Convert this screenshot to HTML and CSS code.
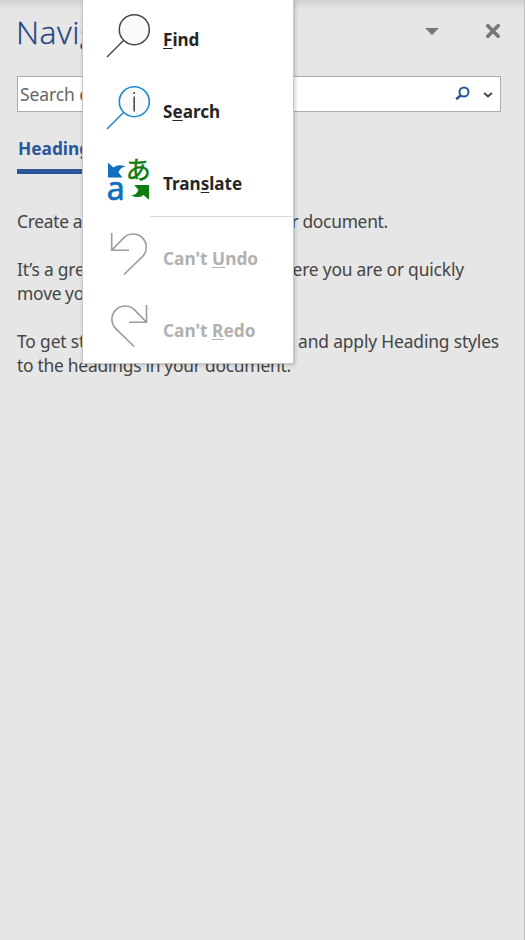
FILE: index.html
```html
<!DOCTYPE html>
<html lang="en">
<head>
<meta charset="utf-8">
<title>Navigation</title>
<link rel="stylesheet" href="styles.css">
</head>
<body>
<main class="pane">
  <header class="pane-header">
    <h1>Navigation</h1>
    <svg class="arrow" width="14" height="8" viewBox="0 0 14 8"><path d="M0 0h14L7 7Z" fill="#777"/></svg>
    <svg class="close" width="16" height="16" viewBox="0 0 16 16"><path d="M2.800 2.800l10.400 10.400M13.200 2.800l-10.400 10.400" stroke="#777" stroke-width="3.700" stroke-linecap="round" fill="none"/></svg>
  </header>
  <div class="search">
    <span class="search-label">Search document</span>
    <svg width="16" height="16" viewBox="0 0 16 16" fill="none" stroke="#2b579a" stroke-width="2"><circle cx="9" cy="6" r="4.500"/><path d="M6 9L1.200 13.200" stroke-width="2.600"/></svg>
    <svg class="chevron" width="10" height="7" viewBox="0 0 10 7"><path d="M1.200 1L5 4.500L8.800 1" fill="none" stroke="#444" stroke-width="1.900"/></svg>
  </div>
  <nav class="tabs"><span class="tab">Headings</span></nav>
  <section class="copy">
    <p><span class="line w1">Create an interactive outline of your document.</span></p>
    <p><span class="line w2">It’s a great way to keep track of where you are or quickly</span><span class="line w3">move your content around.</span></p>
    <p><span class="line w4">To get started, go to the Home tab and apply Heading styles</span><span class="line w5">to the headings in your document.</span></p>
  </section>
</main>
<div class="menu">
  <div class="item">
    <svg class="icon" width="48" height="48" viewBox="0 0 48 48" fill="none" stroke="#444" stroke-width="1.500"><circle cx="31.300" cy="17.700" r="15" fill="#fafafa"/><path d="M20.500 28.500L4 45"/></svg>
    <span class="label"><u>F</u>ind</span>
  </div>
  <div class="item">
    <svg class="icon" width="48" height="48" viewBox="0 0 48 48" fill="none" stroke="#1e8bcd" stroke-width="1.600"><circle cx="31.300" cy="17.700" r="15" fill="#fafafa"/><path d="M20.500 28.500L4 45"/><path d="M31.200 8v2M31.200 12.500v15" stroke="#444" stroke-width="1.500"/></svg>
    <span class="label">S<u>e</u>arch</span>
  </div>
  <div class="item">
    <svg class="icon" width="48" height="48" viewBox="0 0 48 48"><path d="M5 6.700L10.500 11.500Q15 7.500 22.700 10.500Q17.500 11 15.500 16.500L19.500 21.400H5Z" fill="#106ebe"/><path d="M46 43.700V29H31.200L35.500 34Q33.500 39 28 39.500Q36 43 40.500 38.900Z" fill="#107c10"/><text class="latin" x="3.800" y="43.600">a</text><text class="kana" x="22.700" y="22.500">あ</text></svg>
    <span class="label">Tran<u>s</u>late</span>
  </div>
  <div class="rule"></div>
  <div class="item disabled">
    <svg class="icon" width="48" height="48" viewBox="0 0 48 48" fill="none" stroke="#9c9c9c" stroke-width="1.600"><path d="M8.700 2V19.200H26M8.700 19.200L20.900 6.600A13.300 13.300 0 0 1 39.700 25.400L21 43.500"/></svg>
    <span class="label">Can't <u>U</u>ndo</span>
  </div>
  <div class="item disabled">
    <svg class="icon" width="48" height="48" viewBox="0 0 48 48" fill="none" stroke="#9c9c9c" stroke-width="1.600"><path d="M43.500 2V19.200H26M43.500 19.200L31.300 6.600A13.300 13.300 0 0 0 12.500 25.400L31.200 43.500"/></svg>
    <span class="label">Can't <u>R</u>edo</span>
  </div>
</div>
</body>
</html>
```

FILE: styles.css
```css
* { box-sizing: border-box; }
body {
  margin: 0;
  width: 525px;
  height: 940px;
  overflow: hidden;
  position: relative;
  font-family: "Noto Sans", "Open Sans", sans-serif;
  color: #444;
  background: #e6e6e6;
}
.pane {
  height: 940px;
  padding: 0 23px 0 17px;
  border-right: 1px solid #bdbdbd;
  background: linear-gradient(#d0d0d0, #e6e6e6 9px);
}
.pane-header { height: 76px; display: flex; align-items: flex-start; }
h1 {
  margin: 10px auto 0 -1px;
  font: 300 32px/44px "Open Sans", sans-serif;
  letter-spacing: .5px;
  color: #1f4383;
  -webkit-text-stroke: .3px #1f4383;
}
.arrow { margin: 28px 46px 0 0; }
.close { margin: 23px 0 0; }
.search {
  width: 484px;
  height: 36px;
  padding: 0 7px 0 2px;
  display: flex;
  align-items: center;
  background: #fff;
  border: 1px solid #ababab;
}
.search-label { margin-right: auto; font-size: 17.5px; color: #666; letter-spacing: -.1px; }
.chevron { margin: 2px 0 0 12px; }
.tabs { height: 62px; display: flex; align-items: flex-start; }
.tab {
  height: 62px;
  padding: 24px 1px 0;
  font-size: 17.3px;
  line-height: 26px;
  font-weight: 700;
  color: #2b579a;
  background: linear-gradient(#2b579a, #2b579a) 0 57px / 100% 5px no-repeat;
}
.copy { padding-top: 35px; font-size: 17.4px; line-height: 24px; letter-spacing: -.15px; word-spacing: -.8px; }
.copy p { margin: 0 0 24px; }
.line { display: block; white-space: nowrap; text-align-last: justify; }
.w1 { width: 371px; letter-spacing: -.28px; word-spacing: -.5px; }
.w2 { width: 447px; }
.w3 { width: 212px; }
.w4 { width: 482px; }
.w5 { width: 274px; letter-spacing: -.22px; word-spacing: -.5px; }
.menu {
  position: absolute;
  left: 82px;
  top: 0;
  width: 212px;
  height: 364px;
  background: #fff;
  border: 1px solid #c6c6c6;
  border-top: 0;
  box-shadow: 1px 1px 4px rgba(0,0,0,.22);
}
.item { height: 72px; display: flex; padding-left: 20px; }
.icon { margin-top: 12px; flex: none; overflow: visible; }
.label {
  margin: 27px 0 0 12px;
  font-size: 17.1px;
  line-height: 26px;
  font-weight: 700;
  color: #262626;
  white-space: nowrap;
}
.label u { text-decoration-thickness: 1px; text-underline-offset: 2px; text-decoration-skip-ink: none; }
.rule { height: 1px; margin: 0 1px 2px 67px; background: #dadada; }
.disabled .label { color: #b1b1b1; font-size: 17.3px; }
.latin { font: 32px "Noto Sans", sans-serif; fill: #106ebe; stroke: #106ebe; stroke-width: .7px; }
.kana { font: 400 25px "Noto Sans CJK JP", sans-serif; fill: #107c10; stroke: #107c10; stroke-width: .6px; }
```
